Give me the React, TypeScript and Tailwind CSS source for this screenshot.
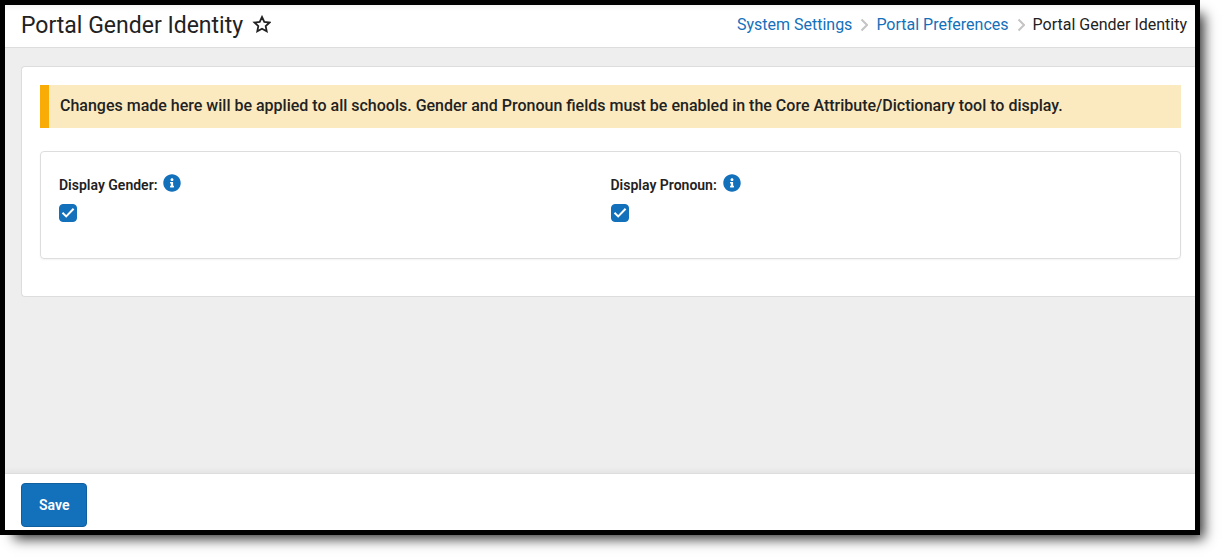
import { useState } from "react";
import { FaInfoCircle } from "react-icons/fa";

function Chevron() {
  return (
    <svg aria-hidden="true" viewBox="0 0 8 14" className="h-3.5 w-2" fill="none" stroke="#c4c4c4" strokeWidth="2">
      <path d="M1.5 1.5 7 7 1.5 12.5" />
    </svg>
  );
}

function CheckField({ id, label }: { id: string; label: string }) {
  const [checked, setChecked] = useState(true);
  return (
    <div className="flex flex-col gap-[11px]">
      <div className="flex h-5 items-center gap-1.5">
        <label htmlFor={id} className="pt-1 text-sm leading-5 font-semibold">
          {label}
        </label>
        <button type="button" aria-label={`About ${label}`} className="text-[#1370ba]">
          <FaInfoCircle className="size-[18px]" />
        </button>
      </div>
      <div className="grid size-[18px]">
        <input
          id={id}
          type="checkbox"
          checked={checked}
          onChange={(e) => setChecked(e.target.checked)}
          className="peer col-start-1 row-start-1 size-[18px] appearance-none rounded-sm border border-[#1370ba] bg-white checked:bg-[#1370ba]"
        />
        <svg
          aria-hidden="true"
          viewBox="0 0 18 18"
          className="pointer-events-none invisible col-start-1 row-start-1 size-[18px] peer-checked:visible"
          fill="none"
          stroke="#fff"
          strokeWidth="2"
        >
          <path d="M3.5 8.8 7.2 12.4 14.6 4.8" />
        </svg>
      </div>
    </div>
  );
}

export default function App() {
  return (
    <div className="h-screen bg-white pr-[25px] pb-[25px] font-[Roboto,sans-serif] text-[#222]">
      <div className="flex h-full flex-col overflow-hidden border-5 border-black bg-[#eee] shadow-[9px_9px_12px_-5px_rgba(0,0,0,0.8)]">
        <header className="flex items-center justify-between border-b border-[#ddd] bg-white bg-linear-to-b from-[#f4f4f4] to-white to-15% pt-1 pr-2 pb-1.5 pl-4">
          <div className="flex items-center gap-2">
            <h1 className="pt-0.5 text-[23px] leading-[30px]">Portal Gender Identity</h1>
            <button type="button" aria-label="Add to favorites">
              <svg viewBox="0 0 20 20" className="size-5" fill="none" stroke="currentColor" strokeWidth="1.8">
                <path d="M11 2 13.3 6.9 18.6 7.5 14.7 11.1 15.7 16.3 11 13.7 6.3 16.3 7.3 11.1 3.4 7.5 8.7 6.9Z" />
              </svg>
            </button>
          </div>
          <nav aria-label="Breadcrumb" className="flex items-center gap-2 text-base leading-8">
            <a href="#system-settings" className="text-[#1370ba]">System Settings</a>
            <Chevron />
            <a href="#portal-preferences" className="text-[#1370ba]">Portal Preferences</a>
            <Chevron />
            <span aria-current="page">Portal Gender Identity</span>
          </nav>
        </header>

        <main className="flex-1 pt-[18px] pl-4">
          <section className="rounded-l border border-r-0 border-[#ddd] bg-white pt-[18px] pr-3.5 pb-[37px] pl-[18px]">
            <p role="note" className="mb-[23px] border-l-9 border-[#f9ac06] bg-[#fbeac0] px-[11px] pt-[9px] pb-2.5 text-base leading-6 font-medium">
              Changes made here will be applied to all schools. Gender and Pronoun fields must be enabled in the Core
              Attribute/Dictionary tool to display.
            </p>
            <div className="grid grid-cols-2 rounded border border-[#ddd] px-[18px] pt-[21px] pb-9 shadow-xs">
              <CheckField id="display-gender" label="Display Gender:" />
              <CheckField id="display-pronoun" label="Display Pronoun:" />
            </div>
          </section>
        </main>

        <footer className="border-t border-[#ddd] bg-white px-4 pt-[9px] pb-[3px] shadow-[0_-2px_6px_rgba(0,0,0,0.05)]">
          <button
            type="button"
            className="block h-11 rounded border border-[#0f5f9f] bg-[#1370ba] px-[17px] text-sm font-semibold text-white"
          >
            Save
          </button>
        </footer>
      </div>
    </div>
  );
}
